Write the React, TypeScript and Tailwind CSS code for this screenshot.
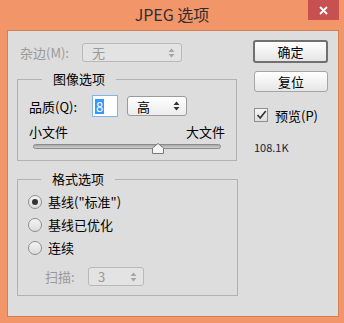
import React from "react";

const font = { fontFamily: '"Noto Sans CJK SC", "Liberation Sans", sans-serif' };

function Arrows({ color = "#444" }: { color?: string }) {
  return (
    <svg width="7" height="10" viewBox="0 0 7 10">
      <path d="M3.5 0.5 L6.5 4 L0.5 4 Z" fill={color} />
      <path d="M3.5 9.5 L6.5 6 L0.5 6 Z" fill={color} />
    </svg>
  );
}

function Select({
  value,
  width,
  height,
  disabled,
}: {
  value: string;
  width: string;
  height: string;
  disabled?: boolean;
}) {
  return (
    <div
      className={`${width} ${height} flex items-center justify-between rounded-[3px] border pl-[9px] pr-[6px] text-[13px] leading-none ${
        disabled
          ? "border-[#b9b9b9] bg-[#e3e3e3] text-[#9a9a9a]"
          : "border-[#9b9b9b] bg-gradient-to-b from-[#ffffff] to-[#ececec] text-black"
      }`}
    >
      <span>{value}</span>
      <Arrows color={disabled ? "#a5a5a5" : "#333"} />
    </div>
  );
}

function Radio({ checked, label }: { checked?: boolean; label: string }) {
  return (
    <div className="flex h-[23px] items-center gap-[6px]">
      <div className="flex h-[14px] w-[14px] items-center justify-center rounded-full border border-[#8e8e8e] bg-gradient-to-b from-[#f4f4f4] to-[#dcdcdc]">
        {checked && <div className="h-[6px] w-[6px] rounded-full bg-[#333]" />}
      </div>
      <span className="text-[13px] leading-none text-black">{label}</span>
    </div>
  );
}

export default function App() {
  return (
    <div className="h-[323px] w-[344px] bg-[#F29569]" style={font}>
      {/* title bar */}
      <div className="relative flex h-[30px] items-center justify-center pb-[2px]">
        <span className="text-[16px] text-[#2f2f2f]">JPEG 选项</span>
        <div className="absolute right-[5px] top-0 flex h-[20px] w-[31px] items-center justify-center bg-[#C75050]">
          <svg width="9" height="9" viewBox="0 0 9 9">
            <path d="M1 1 L8 8 M8 1 L1 8" stroke="#fff" strokeWidth="1.8" />
          </svg>
        </div>
      </div>

      {/* body */}
      <div className="ml-[7px] flex h-[287px] w-[332px] border border-[#d27f57] bg-[#DDDDDD]">
        {/* left column */}
        <div className="w-[230px] pl-[9px]">
          <div className="mt-[12px] flex h-[19px] items-center">
            <span className="ml-[3px] w-[62px] text-[13px] leading-none text-[#9a9a9a]">杂边(M):</span>
            <Select value="无" width="w-[100px]" height="h-[19px]" disabled />
          </div>

          <fieldset className="mt-[9px] h-[90px] w-[220px] border border-[#b2b2b2] pl-[11px] pr-[11px]">
            <legend className="ml-[13px] px-[11px] text-[13px] leading-[16px] text-black">图像选项</legend>
            <div className="mt-[8px] flex items-center">
              <span className="w-[63px] text-[13px] leading-none text-black">品质(Q):</span>
              <div className="flex h-[22px] w-[26px] items-center border border-[#7eb4ea] bg-white pl-[2px]">
                <span className="bg-[#3399ff] px-[1px] text-[13px] leading-[15px] text-white">8</span>
              </div>
              <div className="ml-[9px]">
                <Select value="高" width="w-[60px]" height="h-[20px]" />
              </div>
            </div>
            <div className="mt-[8px] flex justify-between text-[13px] leading-[14px] text-black">
              <span>小文件</span>
              <span>大文件</span>
            </div>
            <div className="relative ml-[4px] mt-[5px] h-[10px] w-[188px]">
              <div className="mt-[2px] h-[5px] w-full rounded-full border border-[#8a8a8a] bg-gradient-to-b from-[#a9a9a9] to-[#cfcfcf]" />
              <svg className="absolute left-[119px] top-[-1px]" width="12" height="11" viewBox="0 0 12 11">
                <path d="M6 0.5 L11.5 5 L11.5 10.5 L0.5 10.5 L0.5 5 Z" fill="#f4f4f4" stroke="#7a7a7a" />
              </svg>
            </div>
          </fieldset>

          <fieldset className="mt-[10px] h-[125px] w-[221px] border border-[#b2b2b2] pl-[10px]">
            <legend className="ml-[13px] px-[11px] text-[13px] leading-[16px] text-black">格式选项</legend>
            <div className="mt-[3px]">
              <Radio checked label={'基线("标准")'} />
              <Radio label="基线已优化" />
              <Radio label="连续" />
            </div>
            <div className="ml-[17px] mt-[8px] flex h-[19px] items-center">
              <span className="w-[43px] text-[13px] leading-none text-[#9a9a9a]">扫描:</span>
              <Select value="3" width="w-[56px]" height="h-[19px]" disabled />
            </div>
          </fieldset>
        </div>

        {/* right column */}
        <div className="ml-[15px] flex flex-col">
          <div className="mt-[9px] flex h-[23px] w-[75px] items-center justify-center rounded-[3px] border-2 border-[#707070] bg-gradient-to-b from-[#ffffff] to-[#e6e6e6] text-[13px] leading-none text-black">
            确定
          </div>
          <div className="ml-[1px] mt-[8px] flex h-[21px] w-[74px] items-center justify-center rounded-[3px] border border-[#a5a5a5] bg-gradient-to-b from-[#ffffff] to-[#e6e6e6] text-[13px] leading-none text-black">
            复位
          </div>
          <div className="ml-[1px] mt-[16px] flex items-center gap-[7px]">
            <div className="flex h-[14px] w-[14px] items-center justify-center border border-[#8e8e8e] bg-gradient-to-b from-[#f6f6f6] to-[#dedede]">
              <svg width="11" height="10" viewBox="0 0 11 10">
                <path d="M1.5 5 L4.2 8 L9.8 1" fill="none" stroke="#333" strokeWidth="1.6" />
              </svg>
            </div>
            <span className="text-[13px] leading-none text-black">预览(P)</span>
          </div>
          <div className="ml-[1px] mt-[20px] text-[11px] leading-none text-[#1c1c3c]">108.1K</div>
        </div>
      </div>
    </div>
  );
}
